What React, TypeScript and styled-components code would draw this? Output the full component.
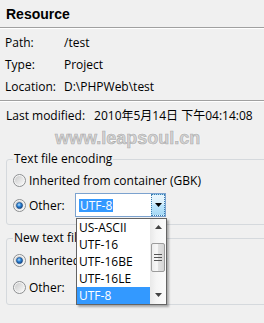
import React from 'react';
import styled, { createGlobalStyle } from 'styled-components';

const GlobalStyle = createGlobalStyle`
  html, body { margin: 0; padding: 0; background: #f0f0f0; }
  body {
    font-family: "Open Sans", "Noto Sans CJK SC", sans-serif;
    font-size: 12px;
    color: #000;
  }
`;

const Page = styled.div`
  position: relative;
  width: 264px;
  height: 323px;
  overflow: hidden;
  display: flex;
  flex-direction: column;
`;

const Title = styled.div`
  height: 27px;
  padding-left: 6px;
  display: flex;
  align-items: center;
  font-family: "Liberation Sans", Arial, sans-serif;
  font-weight: bold;
  font-size: 14px;
`;

const Separator = styled.div`
  height: 0;
  border-top: 1px solid #a0a0a0;
  border-bottom: 1px solid #ffffff;
`;

const InfoGrid = styled.div`
  display: grid;
  grid-template-columns: 59px auto;
  grid-auto-rows: 22px;
  align-items: center;
  padding: 2px 0 3px 5px;
`;

const LastModified = styled.div`
  height: 22px;
  margin-top: 2px;
  padding-left: 6px;
  display: flex;
  align-items: center;
  gap: 9px;
`;

const Watermark = styled.div`
  height: 24px;
  padding-left: 55px;
  display: flex;
  align-items: center;
  font-family: "Liberation Sans", Arial, sans-serif;
  font-weight: bold;
  font-size: 18px;
  color: #d4d4d4;
  -webkit-text-stroke: 0.6px #a8a8a8;
  text-shadow: 0 0 2px #ffffff, 0 0 2px #ffffff, 0 0 1px #ffffff;
`;

const Group = styled.fieldset<{ $top: number }>`
  margin: ${(p) => p.$top}px -10px 0 6px;
  padding: 0 0 7px 6px;
  border: 1px solid #d5d9dd;
  border-radius: 3px;
  min-width: 0;
  display: flex;
  flex-direction: column;
`;

const Legend = styled.legend`
  padding: 0 1px;
  line-height: 16px;
  margin-left: 0;
`;

const Rows = styled.div<{ $pt: number; $gap: number }>`
  display: flex;
  flex-direction: column;
  padding-top: ${(p) => p.$pt}px;
  gap: ${(p) => p.$gap}px;
`;

const RadioRow = styled.div<{ $h: number }>`
  height: ${(p) => p.$h}px;
  display: flex;
  align-items: center;
  white-space: nowrap;
`;

const RadioText = styled.span<{ $w?: number }>`
  margin-left: 3px;
  ${(p) => (p.$w ? `width: ${p.$w}px;` : '')}
`;

const ComboWrap = styled.div`
  position: relative;
  width: 91px;
  height: 24px;
`;

const ComboBox = styled.div`
  box-sizing: border-box;
  width: 100%;
  height: 100%;
  border: 1px solid #7ba2cf;
  background: #ffffff;
  display: flex;
  align-items: center;
`;

const Selected = styled.span`
  margin-left: 3px;
  padding: 0 1px;
  line-height: 13px;
  height: 13px;
  background: #3399ff;
  color: #ffffff;
`;

const ComboButton = styled.div`
  margin-left: auto;
  box-sizing: border-box;
  width: 14px;
  height: 100%;
  border: 1px dotted #3c7fb1;
  background: linear-gradient(#eaf6fd, #d9f0fc 45%, #bee6fd 50%, #a7d9f5);
  display: flex;
  align-items: center;
  justify-content: center;
`;

const DropList = styled.div`
  position: absolute;
  top: 25px;
  left: 1px;
  box-sizing: border-box;
  width: 91px;
  height: 87px;
  border: 1px solid #646464;
  background: #ffffff;
  box-shadow: 2px 2px 2px rgba(0, 0, 0, 0.3);
  display: flex;
  z-index: 5;
`;

const Items = styled.div`
  flex: 1;
  display: flex;
  flex-direction: column;
`;

const Item = styled.div<{ $active?: boolean }>`
  height: 17px;
  line-height: 17px;
  padding-left: 2px;
  white-space: nowrap;
  overflow: hidden;
  background: ${(p) => (p.$active ? '#3399ff' : 'transparent')};
  color: ${(p) => (p.$active ? '#ffffff' : '#000000')};
`;

const ScrollBar = styled.div`
  width: 16px;
  display: flex;
  flex-direction: column;
  background: linear-gradient(to right, #e9e9e9, #f5f5f5 40%, #fbfbfb);
`;

const ScrollButton = styled.div`
  height: 17px;
  display: flex;
  align-items: center;
  justify-content: center;
`;

const Track = styled.div`
  flex: 1;
  padding-top: 7px;
`;

const Thumb = styled.div`
  box-sizing: border-box;
  margin-left: 1px;
  width: 14px;
  height: 29px;
  border: 1px solid #9c9c9c;
  border-radius: 2px;
  background: linear-gradient(to right, #ececec, #f9f9f9 45%, #e2e2e2 50%, #d6d6d6);
  display: flex;
  align-items: center;
  justify-content: center;
`;

const Radio: React.FC<{ checked?: boolean }> = ({ checked }) => (
  <svg width="13" height="13" viewBox="0 0 13 13" style={{ flex: 'none' }}>
    <defs>
      <linearGradient id="rgIn" x1="0" y1="0" x2="1" y2="1">
        <stop offset="0" stopColor="#cbcbcb" />
        <stop offset="1" stopColor="#fafafa" />
      </linearGradient>
      <radialGradient id="rgDot" cx="0.42" cy="0.38" r="0.65">
        <stop offset="0" stopColor="#b9e0fb" />
        <stop offset="0.45" stopColor="#2f86d8" />
        <stop offset="1" stopColor="#0f3f82" />
      </radialGradient>
    </defs>
    <circle cx="6.5" cy="6.5" r="6" fill="#f6f6f6" stroke="#8c8e90" />
    <circle cx="6.5" cy="6.5" r="4.6" fill="url(#rgIn)" />
    {checked && <circle cx="6.5" cy="6.5" r="3.1" fill="url(#rgDot)" stroke="#16467f" strokeWidth="0.6" />}
  </svg>
);

const Triangle: React.FC<{ up?: boolean; color?: string; w?: number }> = ({ up, color = '#000', w = 7 }) => {
  const h = Math.ceil(w / 2);
  return (
    <svg width={w} height={h + 1} viewBox={`0 0 ${w} ${h + 1}`}>
      {up ? (
        <polygon points={`0,${h} ${w},${h} ${w / 2},0`} fill={color} />
      ) : (
        <polygon points={`0,0 ${w},0 ${w / 2},${h}`} fill={color} />
      )}
    </svg>
  );
};

const Grip = () => (
  <svg width="8" height="7" viewBox="0 0 8 7">
    <rect x="0" y="0" width="8" height="1" fill="#555" />
    <rect x="0" y="3" width="8" height="1" fill="#555" />
    <rect x="0" y="6" width="8" height="1" fill="#555" />
  </svg>
);

const encodings = ['US-ASCII', 'UTF-16', 'UTF-16BE', 'UTF-16LE', 'UTF-8'];

export default function App() {
  return (
    <Page>
      <GlobalStyle />
      <Title>Resource</Title>
      <Separator />
      <InfoGrid>
        <span>Path:</span>
        <span>/test</span>
        <span>Type:</span>
        <span>Project</span>
        <span>Location:</span>
        <span>D:\PHPWeb\test</span>
      </InfoGrid>
      <Separator />
      <LastModified>
        <span>Last modified:</span>
        <span>2010年5月14日 下午04:14:08</span>
      </LastModified>
      <Watermark>www.leapsoul.cn</Watermark>
      <Group $top={1}>
        <Legend>Text file encoding</Legend>
        <Rows $pt={3} $gap={3}>
          <RadioRow $h={20}>
            <Radio />
            <RadioText>Inherited from container (GBK)</RadioText>
          </RadioRow>
          <RadioRow $h={24}>
            <Radio checked />
            <RadioText $w={46}>Other:</RadioText>
            <ComboWrap>
              <ComboBox>
                <Selected>UTF-8</Selected>
                <ComboButton>
                  <Triangle />
                </ComboButton>
              </ComboBox>
              <DropList>
                <Items>
                  {encodings.map((e) => (
                    <Item key={e} $active={e === 'UTF-8'}>
                      {e}
                    </Item>
                  ))}
                </Items>
                <ScrollBar>
                  <ScrollButton>
                    <Triangle up color="#444" w={7} />
                  </ScrollButton>
                  <Track>
                    <Thumb>
                      <Grip />
                    </Thumb>
                  </Track>
                  <ScrollButton>
                    <Triangle color="#444" w={7} />
                  </ScrollButton>
                </ScrollBar>
              </DropList>
            </ComboWrap>
          </RadioRow>
        </Rows>
      </Group>
      <Group $top={5}>
        <Legend>New text file line delimiter</Legend>
        <Rows $pt={4} $gap={7}>
          <RadioRow $h={20}>
            <Radio checked />
            <RadioText>Inherited from container</RadioText>
          </RadioRow>
          <RadioRow $h={20}>
            <Radio />
            <RadioText>Other:</RadioText>
          </RadioRow>
        </Rows>
      </Group>
    </Page>
  );
}
